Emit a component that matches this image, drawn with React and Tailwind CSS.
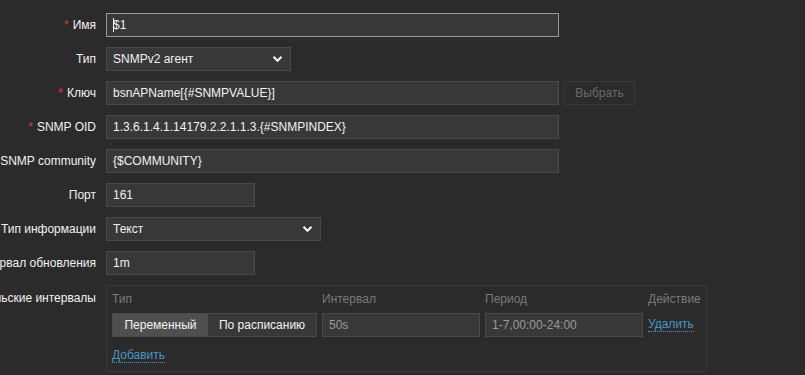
import React from "react";

function Label({ children, req }) {
  return (
    <div className="w-[96px] shrink-0 flex justify-end whitespace-nowrap text-[#f2f2f2]">
      <span>
        {req && <span className="text-[#e33734] mr-[4px]">*</span>}
        {children}
      </span>
    </div>
  );
}

function Input({ value, w, focus, dim, caret }) {
  return (
    <div
      className={`${w} h-[24px] flex items-center px-[6px] bg-[#383838] border ${
        focus ? "border-[#8a9ca3]" : "border-[#4a4a4a]"
      } ${dim ? "text-[#9a9a9a]" : "text-[#f2f2f2]"} whitespace-nowrap overflow-hidden`}
    >
      {caret && <span className="inline-block w-[1px] h-[14px] bg-[#f2f2f2] mr-[-1px]" />}
      {value}
    </div>
  );
}

function Chevron() {
  return (
    <svg width="11" height="8" viewBox="0 0 11 8">
      <path d="M1.5 1.8 L5.5 5.8 L9.5 1.8" stroke="#f2f2f2" strokeWidth="2.2" fill="none" />
    </svg>
  );
}

function Select({ value, w }) {
  return (
    <div className={`${w} h-[24px] flex items-center justify-between pl-[6px] pr-[7px] bg-[#383838] border border-[#4a4a4a] text-[#f2f2f2]`}>
      <span>{value}</span>
      <Chevron />
    </div>
  );
}

function Row({ label, req, children, top }) {
  return (
    <div className={`flex ${top ? "items-start" : "items-center"}`}>
      <div className={top ? "pt-[6px]" : ""}>
        <Label req={req}>{label}</Label>
      </div>
      <div className="ml-[10px] flex items-center gap-[5px]">{children}</div>
    </div>
  );
}

export default function App() {
  return (
    <div
      className="w-[805px] h-[375px] bg-[#2b2b2b] overflow-hidden text-[12px] leading-[14px]"
      style={{ fontFamily: '"Liberation Sans", Arial, sans-serif' }}
    >
      <div className="pt-[13px] flex flex-col gap-[10px]">
        <Row label="Имя" req>
          <Input w="w-[453px]" value="$1" focus caret />
        </Row>
        <Row label="Тип">
          <Select w="w-[185px]" value="SNMPv2 агент" />
        </Row>
        <Row label="Ключ" req>
          <Input w="w-[453px]" value="bsnAPName[{#SNMPVALUE}]" />
          <div className="w-[71px] h-[24px] flex items-center justify-center border border-[#383838] text-[#6a6a6a]">
            Выбрать
          </div>
        </Row>
        <Row label="SNMP OID" req>
          <Input w="w-[453px]" value="1.3.6.1.4.1.14179.2.2.1.1.3.{#SNMPINDEX}" />
        </Row>
        <Row label="SNMP community">
          <Input w="w-[453px]" value="{$COMMUNITY}" />
        </Row>
        <Row label="Порт">
          <Input w="w-[149px]" value="161" />
        </Row>
        <Row label="Тип информации">
          <Select w="w-[215px]" value="Текст" />
        </Row>
        <Row label="Интервал обновления">
          <Input w="w-[149px]" value="1m" />
        </Row>
        <Row label="Пользовательские интервалы" top>
          <div className="w-[601px] h-[87px] border border-[#383838] pl-[5px] pt-[6px]">
            <div className="flex text-[#7a7a7a] h-[14px]">
              <div className="w-[210px]">Тип</div>
              <div className="w-[163px]">Интервал</div>
              <div className="w-[163px]">Период</div>
              <div>Действие</div>
            </div>
            <div className="flex items-center mt-[7px] gap-[5px]">
              <div className="w-[205px] h-[24px] flex border border-[#4a4a4a] bg-[#383838] text-[#f2f2f2]">
                <div className="w-[95px] flex items-center justify-center bg-[#4f4f4f]">Переменный</div>
                <div className="flex-1 flex items-center justify-center">По расписанию</div>
              </div>
              <Input w="w-[158px]" value="50s" dim />
              <Input w="w-[158px]" value="1-7,00:00-24:00" dim />
              <span className="text-[#4796c4] border-b border-dotted border-[#4796c4] leading-[13px]">Удалить</span>
            </div>
            <div className="mt-[11px]">
              <span className="text-[#4796c4] border-b border-dotted border-[#4796c4] leading-[13px]">Добавить</span>
            </div>
          </div>
        </Row>
      </div>
    </div>
  );
}
